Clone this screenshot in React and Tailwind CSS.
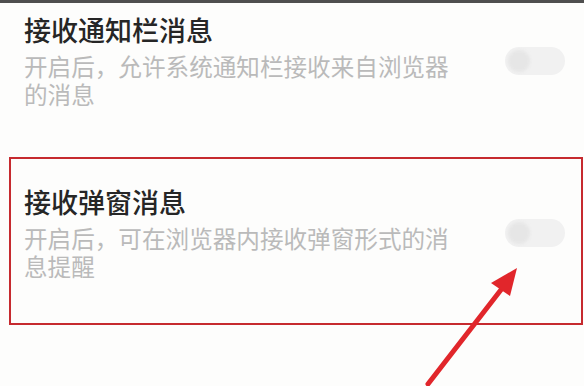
import React from "react";

const cjk = { fontFamily: '"Noto Sans CJK SC", "Noto Sans", sans-serif' };

function Toggle() {
  return (
    <div className="w-[60px] h-[28px] shrink-0 rounded-full bg-[#f1f1f1] flex items-center px-[3px]">
      <div className="w-[22px] h-[22px] rounded-full bg-[#e6e6e6] blur-[1.5px]" />
    </div>
  );
}

function SettingRow({ title, desc }) {
  return (
    <div className="flex items-center justify-between">
      <div>
        <div className="text-[27px] leading-[34px] font-medium text-[#262626]">{title}</div>
        <div className="mt-[5px] w-[440px] text-[23.6px] leading-[28px] text-[#bababa]">{desc}</div>
      </div>
      <Toggle />
    </div>
  );
}

export default function App() {
  return (
    <div className="relative w-[584px] h-[386px] overflow-hidden bg-[#fdfdfc]" style={cjk}>
      <div className="h-[3px] bg-[#4f4f4f]" />

      <div className="pl-[24px] pr-[19px] pt-[10px]">
        <SettingRow
          title="接收通知栏消息"
          desc="开启后，允许系统通知栏接收来自浏览器的消息"
        />
      </div>

      <div className="mt-[49px] ml-[9px] mr-[1px] border-2 border-[#c62a2f] pt-[26px] pl-[13px] pr-[16px] pb-[43px]">
        <SettingRow
          title="接收弹窗消息"
          desc="开启后，可在浏览器内接收弹窗形式的消息提醒"
        />
      </div>

      {/* red annotation arrow */}
      <svg className="absolute inset-0 pointer-events-none" width="584" height="386" viewBox="0 0 584 386">
        <line x1="428" y1="384" x2="507" y2="282" stroke="#e1262b" strokeWidth="5" strokeLinecap="round" />
        <polygon points="517,268 491,283 510,296" fill="#e1262b" />
      </svg>
    </div>
  );
}
